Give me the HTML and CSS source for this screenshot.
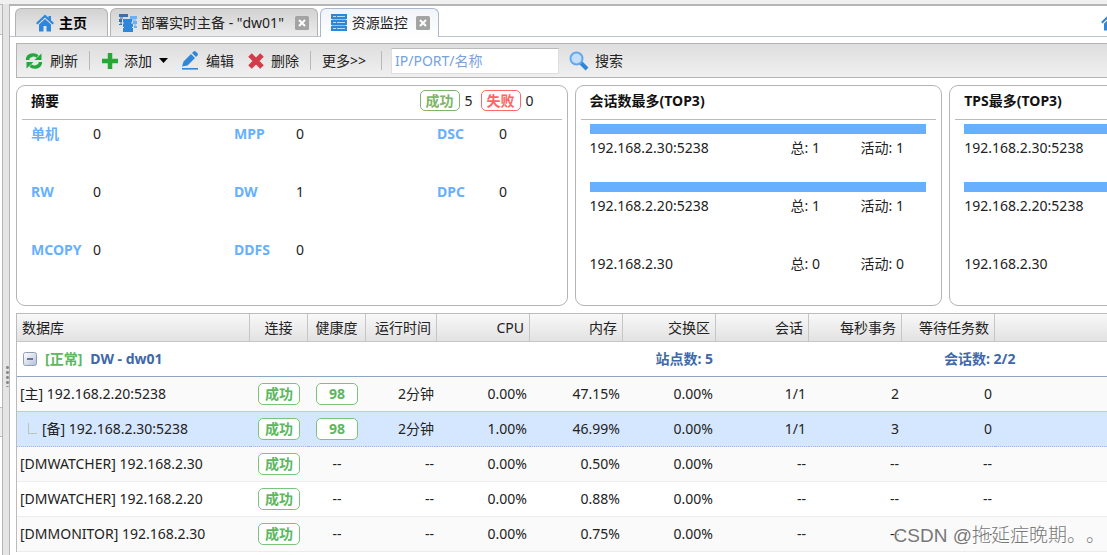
FILE: index.html
```html
<!DOCTYPE html>
<html lang="zh-CN">
<head>
<meta charset="utf-8">
<title>资源监控</title>
<link rel="stylesheet" href="styles.css">
</head>
<body>
<svg class="defs" aria-hidden="true">
  <symbol id="home" viewBox="0 0 18 18"><path fill="#2f87dc" d="M9 .5 0 9l1.500 1.500L9 3.600l7.500 6.900L18 9l-3-2.800V2h-2.500v1.800z"/><path fill="#2f87dc" d="M9 5 3 10.500V17.500h4.500V12h3v5.500H15V10.500z"/></symbol>
  <symbol id="close" viewBox="0 0 14 14"><rect width="14" height="14" rx="1.500" fill="#a3a3a3"/><path d="m4 4 6 6m0-6-6 6" stroke="#fff" stroke-width="2"/></symbol>
</svg>
<div class="app">
  <aside class="west"><div class="west-head"></div><div class="west-item"></div></aside>
  <div class="splitter"><span class="grip"></span></div>
  <main class="main">
    <nav class="tabs">
      <button class="tab home"><svg width="18" height="18"><use href="#home"/></svg><span>主页</span></button>
      <button class="tab deploy"><svg width="18" height="18" viewBox="0 0 18 18"><path fill="#3c6fae" d="M0 0h9v3H0zM1 3.500h3v1H1zM0 5h3v3H0zM1 8.500h2v1H1zM0 10h3v1H0z"/><path fill="#69b0f5" d="M11 2h7v3h-7zM12 5.500h5v1h-5zM14 7h4v3h-4zM15 10.500h2v1h-2zM15 12h3v2h-3z"/><path fill="#2f87dc" d="M4 5h9v3.500H4zM5 8.500h7v1H5zM4 9.500h10V13H4zM5 13h8v1H5zM4 14h10v4H4z"/></svg><span>部署实时主备 - "dw01"</span><svg class="x" width="14" height="14"><use href="#close"/></svg></button>
      <button class="tab active"><svg width="16" height="18" viewBox="0 0 16 18"><path fill="#2f87dc" d="M0 0h16v5H0zM0 6h16v5H0zM0 12h16v5H0z"/><path fill="#8fc2f2" d="M1 5h14v1H1zM1 11h14v1H1z"/><path d="M2 2.500h3m1 0h8M2 8.500h3m1 0h8M2 14.500h3m1 0h8" stroke="#b8dcfb"/></svg><span>资源监控</span><svg class="x" width="14" height="14"><use href="#close"/></svg></button>
      <a class="go-home" href="#" aria-label="主页"><svg width="18" height="18"><use href="#home"/></svg></a>
    </nav>
    <div class="workspace">
      <div class="toolbar">
        <button class="tool"><svg width="18" height="18" viewBox="0 0 18 18"><g fill="none" stroke="#22a83c" stroke-width="3.400"><path d="M2.500 8c0-5 6.500-6.500 10-3.500"/><path d="M15.500 10c0 5-6.500 6.500-10 3.500"/></g><path fill="#22a83c" d="M16.500 1.500V8H9.500zM1.500 16.500V10h7z"/></svg>刷新</button>
        <span class="sep"></span>
        <button class="tool add"><svg width="18" height="18" viewBox="0 0 18 18"><path d="M9 1v16M1 9h16" stroke="#28a636" stroke-width="4.500"/></svg>添加<svg class="caret" width="9" height="5" viewBox="0 0 9 5"><path d="M0 0h9L4.500 5z"/></svg></button>
        <button class="tool edit"><svg width="18" height="19" viewBox="0 0 18 19"><path fill="#2f87dc" d="m1 15.500 1.500-5L10 3l4 4-7.500 7.500zM11 2l1.500-1.500q1-1 2.200 0l1.800 1.800q1 1 0 2.200L15 6z"/><path d="M1 17.800h16" stroke="#2f87dc" stroke-width="1.600"/></svg>编辑</button>
        <button class="tool del"><svg width="16" height="16" viewBox="0 0 16 16"><path d="m2 2 12 12M14 2 2 14" stroke="#d33b4b" stroke-width="5"/></svg>删除</button>
        <span class="sep"></span>
        <button class="tool more">更多&gt;&gt;</button>
        <span class="sep"></span>
        <input class="query" type="text" placeholder="IP/PORT/名称" aria-label="IP/PORT/名称">
        <button class="tool search"><svg width="20" height="20" viewBox="0 0 20 20"><path d="m11 11 7 7" stroke="#2f87dc" stroke-width="4"/><circle cx="7.500" cy="7.500" r="6" fill="#c4defa" stroke="#62a8ee" stroke-width="2"/></svg>搜索</button>
      </div>

      <div class="cards">
        <section class="card">
          <header class="card-head"><h2>摘要</h2><p class="counts"><span class="badge ok">成功</span>5<span class="badge bad">失败</span>0</p></header>
          <dl class="summary">
            <div><dt>单机</dt><dd>0</dd></div><div><dt>MPP</dt><dd>0</dd></div><div><dt>DSC</dt><dd>0</dd></div>
            <div><dt>RW</dt><dd>0</dd></div><div><dt>DW</dt><dd>1</dd></div><div><dt>DPC</dt><dd>0</dd></div>
            <div><dt>MCOPY</dt><dd>0</dd></div><div><dt>DDFS</dt><dd>0</dd></div>
          </dl>
        </section>
        <section class="card">
          <header class="card-head"><h2>会话数最多(TOP3)</h2></header>
          <ul class="ranks">
            <li><div class="bar"><i style="width:100%"></i></div><div class="rank"><span>192.168.2.30:5238</span><span>总: 1</span><span>活动: 1</span></div></li>
            <li><div class="bar"><i style="width:100%"></i></div><div class="rank"><span>192.168.2.20:5238</span><span>总: 1</span><span>活动: 1</span></div></li>
            <li><div class="bar"><i style="width:0%"></i></div><div class="rank"><span>192.168.2.30</span><span>总: 0</span><span>活动: 0</span></div></li>
          </ul>
        </section>
        <section class="card">
          <header class="card-head"><h2>TPS最多(TOP3)</h2></header>
          <ul class="ranks">
            <li><div class="bar"><i style="width:100%"></i></div><div class="rank"><span>192.168.2.30:5238</span></div></li>
            <li><div class="bar"><i style="width:100%"></i></div><div class="rank"><span>192.168.2.20:5238</span></div></li>
            <li><div class="bar"><i style="width:0%"></i></div><div class="rank"><span>192.168.2.30</span></div></li>
          </ul>
        </section>
      </div>

      <table class="grid">
        <colgroup><col class="c-db"><col class="c-tag"><col class="c-tag"><col class="c-time"><col class="c-num"><col class="c-num"><col class="c-num"><col class="c-num"><col class="c-num"><col class="c-num"><col></colgroup>
        <thead><tr><th class="left">数据库</th><th class="mid">连接</th><th class="mid">健康度</th><th>运行时间</th><th>CPU</th><th>内存</th><th>交换区</th><th>会话</th><th>每秒事务</th><th>等待任务数</th><th></th></tr></thead>
        <tbody>
          <tr class="group"><td class="left" colspan="5"><div class="group-name"><button class="fold" aria-label="折叠"><svg width="14" height="14" viewBox="0 0 14 14"><defs><linearGradient id="fg" x1="0" y1="0" x2="1" y2="1"><stop stop-color="#fff"/><stop offset="1" stop-color="#b3c0da"/></linearGradient></defs><rect x=".5" y=".5" width="13" height="13" rx="2" fill="url(#fg)" stroke="#929cb4"/><path d="M4 7h6" stroke="#3f5380" stroke-width="1.500"/></svg></button><span class="state">[正常]</span><span>DW - dw01</span></div></td><td colspan="2">站点数: 5</td><td colspan="2"></td><td class="sessions" colspan="2">会话数: 2/2</td></tr>
          <tr><td class="left">[主] 192.168.2.20:5238</td><td class="mid"><span class="badge">成功</span></td><td class="mid"><span class="badge">98</span></td><td>2分钟</td><td>0.00%</td><td>47.15%</td><td>0.00%</td><td>1/1</td><td>2</td><td>0</td><td></td></tr>
          <tr class="selected"><td class="left"><span class="branch"></span>[备] 192.168.2.30:5238</td><td class="mid"><span class="badge">成功</span></td><td class="mid"><span class="badge">98</span></td><td>2分钟</td><td>1.00%</td><td>46.99%</td><td>0.00%</td><td>1/1</td><td>3</td><td>0</td><td></td></tr>
          <tr><td class="left">[DMWATCHER] 192.168.2.30</td><td class="mid"><span class="badge">成功</span></td><td class="mid">--</td><td>--</td><td>0.00%</td><td>0.50%</td><td>0.00%</td><td>--</td><td>--</td><td>--</td><td></td></tr>
          <tr class="plain"><td class="left">[DMWATCHER] 192.168.2.20</td><td class="mid"><span class="badge">成功</span></td><td class="mid">--</td><td>--</td><td>0.00%</td><td>0.88%</td><td>0.00%</td><td>--</td><td>--</td><td>--</td><td></td></tr>
          <tr><td class="left">[DMMONITOR] 192.168.2.30</td><td class="mid"><span class="badge">成功</span></td><td class="mid">--</td><td>--</td><td>0.00%</td><td>0.75%</td><td>0.00%</td><td>--</td><td>--</td><td>--</td><td></td></tr>
        </tbody>
      </table>
    </div>
  </main>
</div>
<div class="watermark">CSDN @拖延症晚期。。</div>
</body>
</html>
```
FILE: styles.css
```css
* { box-sizing: border-box; }
body, h2, p, dl, dd, ul { margin: 0; padding: 0; }
body, button, input {
  font: 14px/20px "Noto Sans", "Noto Sans CJK SC", sans-serif;
  color: #222;
}
body { background: #f0f0f0; overflow: hidden; }
button { background: none; border: 0; padding: 0; white-space: nowrap; }
svg { display: block; flex: none; }
.defs { position: absolute; width: 0; height: 0; }

.app { display: flex; height: 100vh; padding-top: 4px; overflow: hidden; }
.west { width: 3px; background: #fff; border-top: 1px solid #bbb; border-right: 1px solid #b5b5b5; display: flex; flex-direction: column; justify-content: space-between; padding-bottom: 118px; }
.west-head { height: 30px; background: #ececec; border-bottom: 1px solid #bbb; }
.west-item { height: 30px; background: #eee; border: solid #bbb; border-width: 1px 0; }
.splitter { width: 6px; background: #e4e4e4; display: flex; align-items: center; justify-content: flex-end; padding-top: 192px; }
.grip { width: 3px; height: 22px; background: radial-gradient(circle, #888 1px, transparent 2px) 0 0 / 3px 5px; }
.main { flex: 1; min-width: 0; background: #fff; border: solid #b5b5b5; border-width: 2px 0 0 1px; overflow: hidden; }

.tabs { display: flex; gap: 2px; height: 31px; padding: 2px 6px 0 5px; border-bottom: 1px solid #b9c3cf; }
.tab { display: flex; align-items: center; gap: 5px; height: 28px; padding: 0 8px; border: 1px solid #b2b2b2; border-bottom: 0; border-radius: 6px 6px 0 0; background: linear-gradient(#d2d2d2, #ececec); }
.tab.home { padding: 0 20px; font-weight: bold; color: #000; }
.tab.deploy { padding-left: 8px; gap: 4px; }
.tab.active { height: 29px; padding-left: 10px; border-color: #a9b6cb; background: linear-gradient(#f0f3f8, #fff); }
.tab .x { margin-left: 3px; }
.tab.deploy .x { margin-left: 7px; }
.go-home { margin-left: auto; width: 0; padding-top: 5px; }

.workspace { min-width: 1307px; padding: 6px 0 0 6px; }
.toolbar { display: flex; align-items: center; height: 35px; padding: 0 8px; border: 1px solid #b4b4b4; background: linear-gradient(#dedede, #f0f0f0); }
.tool { display: flex; align-items: center; gap: 7px; }
.tool.add { gap: 5px; }
.tool.edit { margin-left: 13px; }
.tool.del { margin-left: 14px; }
.tool.more { padding-right: 4px; }
.tool.search { margin-left: 10px; gap: 6px; }
.caret { margin-left: 2px; }
.sep { width: 1px; height: 19px; margin: 0 11px; background: #b8b8b8; }
.sep:last-of-type { margin-right: 9px; }
.query { width: 168px; height: 26px; padding: 0 3px; border: 1px solid #dedede; border-top-color: #bbb; background: #fff; }
.query::placeholder { color: #77a2dc; opacity: 1; }

.cards { display: grid; grid-template-columns: 3fr 2fr 2fr; gap: 7px; margin-top: 7px; }
.card { height: 221px; border: 1px solid #b4b4b4; border-radius: 9px; }
.card-head { display: flex; justify-content: space-between; align-items: center; height: 34px; margin: 0 5px; padding: 0 28px 4px 9px; border-bottom: 1px solid #bbb; }
h2 { font-size: 14px; line-height: 20px; color: #111; }
.counts { display: flex; gap: 5px; align-items: center; }
.badge { display: inline-block; width: 42px; height: 22px; border: 1px solid #79c67b; border-radius: 5px; background: #fff; color: #5cb75f; font-weight: bold; text-align: center; vertical-align: middle; }
.badge.ok { width: 40px; height: 21px; border-color: #7fb56b; color: #7fb56b; }
.badge.bad { width: 40px; height: 21px; margin-left: 3px; border-color: #ff6b6b; color: #ff6464; }
.summary { display: grid; grid-template-columns: 203px 203px 1fr; grid-auto-rows: 58px; padding: 4px 0 0 14px; }
.summary div { display: flex; }
dt { width: 62px; color: #67b0ff; font-weight: bold; }
.ranks { list-style: none; padding: 4px 15px 0 14px; }
.ranks li { height: 58px; }
.bar { height: 10px; }
.bar i { display: block; height: 100%; background: #67b0ff; }
.rank { display: grid; grid-template-columns: 201px 70px 1fr; padding-top: 4px; }

.grid { width: 100%; margin-top: 7px; table-layout: fixed; border-collapse: separate; border-spacing: 0; border: solid #bbb; border-width: 1px 0 0 1px; }
.c-db { width: 233px; }
.c-tag { width: 58px; }
.c-time { width: 71px; }
.c-num { width: 93px; }
th, td { padding: 0 3px; text-align: right; white-space: nowrap; }
th { height: 28px; padding: 0 5px; font-weight: normal; background: linear-gradient(#f8f8f8, #e2e2e2); border-right: 1px solid #c6c6c6; border-bottom: 1px solid #c6c6c6; }
th:last-child { border-right: 0; }
td { height: 35px; background: #fafafa; border-bottom: 1px solid #ececec; }
.left { text-align: left; }
.mid { text-align: center; }
th.mid { padding: 0; }
.plain td { background: #fff; }
.group td { background: #fff; color: #3e68aa; font-weight: bold; border-bottom: 1px solid #8fa5c4; }
.group .sessions { text-align: left; padding-left: 42px; }
.group-name { display: flex; align-items: center; gap: 8px; padding-left: 3px; }
.state { color: #5cb75f; }
.selected td { background: #d5e7ff; border-bottom: 1px dotted #9bb8e8; box-shadow: 0 -1px #b5cbf0; }
.branch { display: inline-block; width: 9px; height: 11px; margin: 0 5px 4px 8px; border: solid #bbc4bb; border-width: 0 0 1px 1px; vertical-align: middle; }

.watermark { position: absolute; right: 2px; bottom: 6px; font: 300 19px/26px "Liberation Sans", "Noto Sans CJK SC", sans-serif; text-spacing-trim: space-all; color: #777; text-shadow: 1px 1px #fff; white-space: nowrap; }
```
